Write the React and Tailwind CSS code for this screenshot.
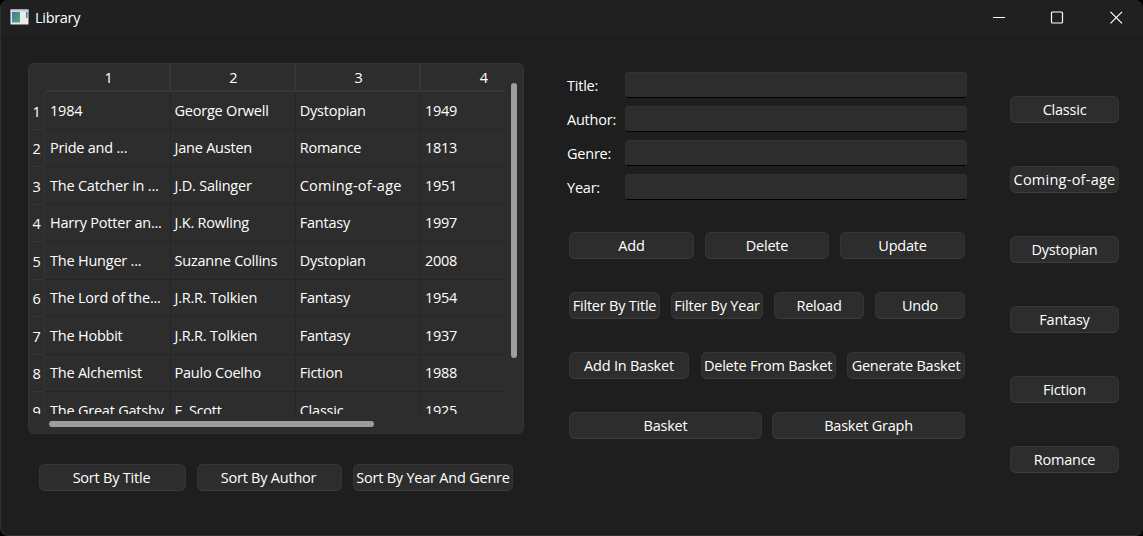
const books = [
  ["1984", "George Orwell", "Dystopian", "1949"],
  ["Pride and ...", "Jane Austen", "Romance", "1813"],
  ["The Catcher in ...", "J.D. Salinger", "Coming-of-age", "1951"],
  ["Harry Potter an...", "J.K. Rowling", "Fantasy", "1997"],
  ["The Hunger ...", "Suzanne Collins", "Dystopian", "2008"],
  ["The Lord of the...", "J.R.R. Tolkien", "Fantasy", "1954"],
  ["The Hobbit", "J.R.R. Tolkien", "Fantasy", "1937"],
  ["The Alchemist", "Paulo Coelho", "Fiction", "1988"],
  ["The Great Gatsby", "F. Scott", "Classic", "1925"],
];

function Button({ children, className = "" }) {
  return (
    <button
      className={`flex h-[27px] shrink-0 items-center justify-center whitespace-nowrap rounded-[6px] border border-[#363636] border-b-[#3b3b3b] bg-[#2d2d2d] ${className}`}
    >
      {children}
    </button>
  );
}

function Field({ label }) {
  return (
    <label className="flex h-[34px] items-start">
      <span className="w-[58px] pt-[4px]">{label}</span>
      <input className="h-[26px] w-[342px] rounded-[4px] border border-[#323232] border-b-black bg-[#2d2d2d] outline-none" />
    </label>
  );
}

function TitleBar() {
  return (
    <header className="flex h-9 shrink-0 items-center bg-[#202020] pl-[9px]">
      <svg width="19" height="16" viewBox="0 0 19 16" className="mr-[6px] -mt-[2px]">
        <defs>
          <linearGradient id="pane" x1="0" y1="0" x2="1" y2="1">
            <stop offset="0" stopColor="#4474a0" />
            <stop offset="1" stopColor="#54ac78" />
          </linearGradient>
        </defs>
        <rect x="0.5" y="0.5" width="18" height="15" fill="#e9ebed" />
        <rect x="0.5" y="0.5" width="18" height="2" fill="#c3ccd3" />
        <rect x="2" y="3" width="8" height="10.5" fill="url(#pane)" />
        <rect x="16" y="3" width="1.6" height="6" fill="url(#pane)" />
      </svg>
      <span className="grow tracking-[-0.3px]">Library</span>
      <svg width="130" height="13" viewBox="0 0 130 13" className="mr-5 -mt-[2px]" fill="none" stroke="#fff">
        <path d="M0 6h12" strokeWidth="1" transform="translate(0 .5)" />
        <rect x="58.5" y="1" width="11" height="11" rx="1" strokeWidth="1.2" />
        <path d="M117.5.8l11.5 11.5M129 .8l-11.5 11.5" strokeWidth="1.2" />
      </svg>
    </header>
  );
}

function BookTable() {
  return (
    <div className="relative h-[371px] w-[496px] rounded-[6px] border border-[#343434] bg-[#2d2d2d]">
      <div className="h-[350px] w-[476px] overflow-hidden">
        <div className="flex h-[28px] w-[518px]">
          <div className="w-4 shrink-0" />
          {[1, 2, 3, 4].map((n) => (
            <div key={n} className={`flex shrink-0 items-center justify-center border-r-2 border-b-2 border-[#363636] pt-[2px] ${n === 1 ? "w-[126px] pl-[3px]" : "w-[125.2px] pl-[1.5px]"}`}>
              {n}
            </div>
          ))}
        </div>
        {books.map((row, i) => (
          <div key={row[0]} className="flex h-[37.5px] w-[518px]">
            <div className="flex w-4 shrink-0 items-center justify-center border-r border-b border-[#363636] pt-[3px]">
              {i + 1}
            </div>
            {row.map((cell, c) => (
              <div key={c} className={`flex shrink-0 items-center whitespace-nowrap border-r border-b border-[#262626] pt-[1px] ${c === 0 ? "w-[126px] pl-[5px]" : "w-[125.2px] pl-[3.5px]"} ${cell === "Coming-of-age" ? "tracking-[0.25px]" : ""}`}>
                {cell}
              </div>
            ))}
          </div>
        ))}
      </div>
      <div className="absolute left-[482px] top-[19px] h-[275px] w-[6px] rounded-full bg-[#9f9da2]" />
      <div className="absolute left-[20px] top-[357px] h-[6px] w-[325px] rounded-full bg-[#9f9da2]" />
    </div>
  );
}

export default function App() {
  return (
    <div className="h-[536px] w-[1143px] bg-black">
      <div className="flex h-full w-full flex-col overflow-hidden rounded-[8px] border-l border-b border-[#303030] bg-[#1e1e1e] font-['Open_Sans',sans-serif] text-[14.5px] leading-5 tracking-[-0.22px] text-white">
        <TitleBar />
        <main className="flex grow">
          <section className="w-[539px] pl-[27px] pt-[27px]">
            <BookTable />
            <div className="flex pl-[11px] pt-[30px]">
              <Button className="mr-[11px] w-[147px] pr-[2px]">Sort By Title</Button>
              <Button className="mr-[11px] w-[145px] pr-[2px]">Sort By Author</Button>
              <Button className="w-[160px]">Sort By Year And Genre</Button>
            </div>
          </section>
          <section className="w-[470px] pt-9">
            <div className="h-[160px] pl-[27px]">
              <Field label="Title:" />
              <Field label="Author:" />
              <Field label="Genre:" />
              <Field label="Year:" />
            </div>
            <div className="flex w-[425px] flex-col gap-[33px] pl-[29px]">
              <div className="flex justify-between">
                <Button className="w-[125px]">Add</Button>
                <Button className="w-[124px]">Delete</Button>
                <Button className="w-[125px]">Update</Button>
              </div>
              <div className="flex justify-between">
                <Button className="w-[91px]">Filter By Title</Button>
                <Button className="w-[92px]">Filter By Year</Button>
                <Button className="w-[90px]">Reload</Button>
                <Button className="w-[90px]">Undo</Button>
              </div>
              <div className="flex justify-between">
                <Button className="w-[120px]">Add In Basket</Button>
                <Button className="w-[135px]">Delete From Basket</Button>
                <Button className="w-[118px]">Generate Basket</Button>
              </div>
              <div className="flex justify-between">
                <Button className="w-[193px]">Basket</Button>
                <Button className="w-[193px]">Basket Graph</Button>
              </div>
            </div>
          </section>
          <section className="flex w-[109px] flex-col gap-[43px] pt-[60px]">
            <Button>Classic</Button>
            <Button className="tracking-[0.25px]">Coming-of-age</Button>
            <Button>Dystopian</Button>
            <Button>Fantasy</Button>
            <Button>Fiction</Button>
            <Button>Romance</Button>
          </section>
        </main>
      </div>
    </div>
  );
}
